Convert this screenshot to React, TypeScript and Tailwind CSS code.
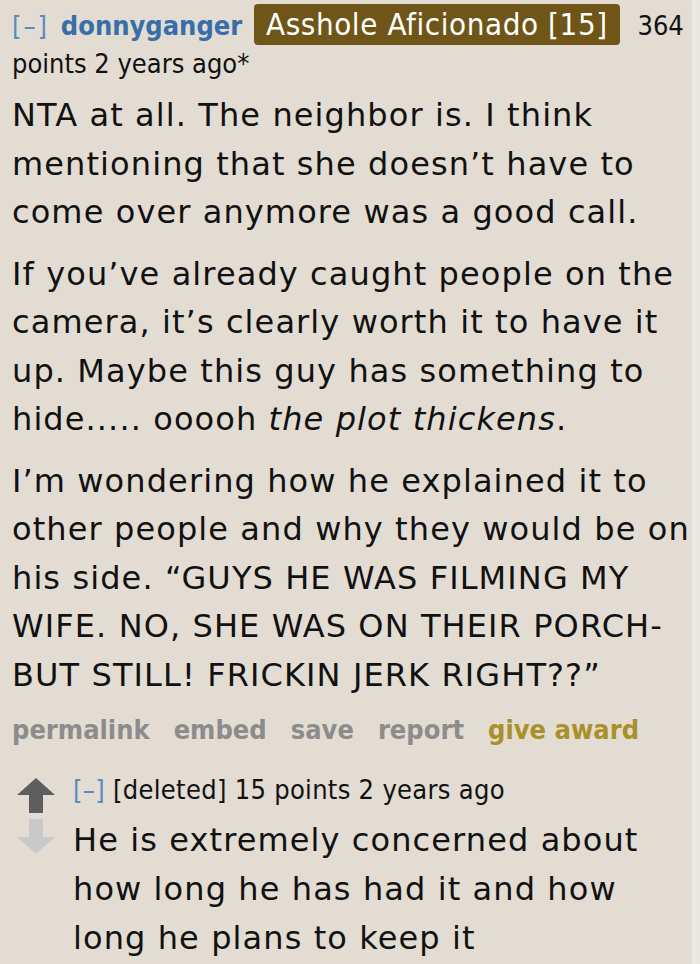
import React from 'react';

const BODY = { fontFamily: '"DejaVu Sans", Verdana, sans-serif' };
const META = { fontFamily: '"DejaVu Sans Condensed", "DejaVu Sans", Tahoma, sans-serif' };

const Arrow = ({ down = false, color }: { down?: boolean; color: string }) => (
  <svg width="38" height="35" viewBox="0 0 38 35" className={down ? 'rotate-180' : ''}>
    <path d="M19 0 L38 17 L26 17 L26 35 L12 35 L12 17 L0 17 Z" fill={color} />
  </svg>
);

export default function App() {
  return (
    <div className="flex min-h-[964px] w-[700px] bg-[#ebe7e2]">
      <div className="w-[692px] bg-[#e2dcd3] pl-3 text-[#111]">
        {/* comment header */}
        <div className="pt-[4px] text-[27px] leading-[38px]" style={META}>
          <span className="tracking-[2px] text-[#5a8bc4]">[–]</span>{' '}
          <span className="ml-[4px] font-bold text-[#3a6ea8]">donnyganger</span>{' '}
          <span className="ml-[4px] inline-block rounded-[4px] bg-[#6f5618] px-[12px] text-[31px] leading-[41px] tracking-[0.6px] text-white">
            Asshole Aficionado [15]
          </span>{' '}
          <span className="ml-[10px]">364 points 2 years ago*</span>
        </div>

        {/* comment body */}
        <div className="mt-[8px] text-[32px] leading-[48.5px] tracking-[1.1px]" style={BODY}>
          <p>NTA at all. The neighbor is. I think mentioning that she doesn’t have to come over anymore was a good call.</p>
          <p className="mt-[13px]">
            If you’ve already caught people on the camera, it’s clearly worth it to have it up. Maybe this guy has
            something to hide..... ooooh <em>the plot thickens</em>.
          </p>
          <p className="mt-[13px]">
            I’m wondering how he explained it to other people and why they would be on his side. “GUYS HE WAS FILMING MY
            WIFE. NO, SHE WAS ON THEIR PORCH- BUT STILL! FRICKIN JERK RIGHT??”
          </p>
        </div>

        {/* action links */}
        <div className="mt-[11px] flex gap-[24px] text-[27px] font-bold leading-[40px] text-[#8c8c8c]" style={META}>
          <span>permalink</span>
          <span>embed</span>
          <span>save</span>
          <span>report</span>
          <span className="text-[#a89128]">give award</span>
        </div>

        {/* reply */}
        <div className="mt-[22px] flex">
          <div className="ml-[5px] flex w-[56px] flex-col gap-[6px] pt-[6px]">
            <Arrow color="#5e5e5e" />
            <Arrow down color="#c9c9c9" />
          </div>
          <div className="flex-1">
            <div className="text-[27px] leading-[36px] tracking-[0.3px]" style={META}>
              <span className="text-[#5a8bc4]">[–]</span> <span>[deleted]</span> 15 points 2 years ago
            </div>
            <p className="mt-[8px] text-[32px] leading-[49px] tracking-[1.1px]" style={BODY}>
              He is extremely concerned about how long he has had it and how long he plans to keep it
            </p>
          </div>
        </div>
      </div>
    </div>
  );
}
